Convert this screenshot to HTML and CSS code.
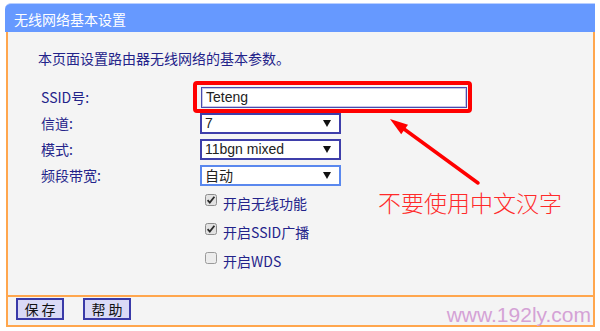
FILE: index.html
```html
<!DOCTYPE html>
<html lang="zh-CN">
<head>
<meta charset="utf-8">
<title>无线网络基本设置</title>
<link rel="stylesheet" href="styles.css">
</head>
<body>
<div class="panel">
  <div class="header">无线网络基本设置</div>
  <div class="content">
    <div class="intro">本页面设置路由器无线网络的基本参数。</div>
    <div class="form">
      <div class="label">SSID号:</div>
      <div class="ctrl"><span class="ssid-wrap"><span class="input">Teteng</span></span></div>
      <div class="label">信道:</div>
      <div class="ctrl"><div class="select"><span>7</span><span class="arrow"></span></div></div>
      <div class="label">模式:</div>
      <div class="ctrl"><div class="select"><span>11bgn mixed</span><span class="arrow"></span></div></div>
      <div class="label">频段带宽:</div>
      <div class="ctrl"><div class="select focus"><span class="cjk">自动</span><span class="arrow"></span></div></div>
      <div class="label"></div>
      <div class="ctrl check-row"><svg class="cb" width="12" height="12" viewBox="0 0 12 12"><rect x="0.5" y="0.5" width="11" height="11" rx="2" fill="#e2e2e2" stroke="#8c8c8c"/><path d="M2.6 6.2 L4.8 8.6 L9.4 2.8" fill="none" stroke="#2a2a2a" stroke-width="1.8"/></svg><span>开启无线功能</span></div>
      <div class="label"></div>
      <div class="ctrl check-row"><svg class="cb" width="12" height="12" viewBox="0 0 12 12"><rect x="0.5" y="0.5" width="11" height="11" rx="2" fill="#e2e2e2" stroke="#8c8c8c"/><path d="M2.6 6.2 L4.8 8.6 L9.4 2.8" fill="none" stroke="#2a2a2a" stroke-width="1.8"/></svg><span>开启SSID广播</span></div>
      <div class="label"></div>
      <div class="ctrl check-row"><svg class="cb" width="12" height="12" viewBox="0 0 12 12"><rect x="0.5" y="0.5" width="11" height="11" rx="2" fill="#ececec" stroke="#9a9a9a"/></svg><span>开启WDS</span></div>
    </div>
    <svg class="arrow-note" width="585" height="263" viewBox="0 0 585 263">
      <line x1="396" y1="97" x2="470" y2="151" stroke="#ff0000" stroke-width="3.5" stroke-linecap="round"/>
      <polygon points="382,87 393.2,102.2 400,92.8" fill="#ff0000"/>
    </svg>
    <div class="note">不要使用中文汉字</div>
  </div>
  <div class="footer">
    <span class="btn">保存</span>
    <span class="btn">帮助</span>
    <span class="watermark">www.192ly.com</span>
  </div>
</div>
</body>
</html>
```
FILE: styles.css
```css
html, body {
  margin: 0;
  padding: 0;
  background: #ffffff;
}
body {
  font-family: "Noto Sans CJK SC", "Liberation Sans", sans-serif;
}
.panel {
  margin: 3px 0 0 5px;
  width: 590px;
}
.header {
  box-sizing: border-box;
  height: 29px;
  background: #6699ff;
  border-top: 1px solid #b9cfff;
  border-top-left-radius: 6px;
  color: #ffffff;
  font-size: 14px;
  line-height: 25px;
  padding: 3px 0 0 9px;
}
.content {
  position: relative;
  box-sizing: border-box;
  margin-left: 1px;
  width: 589px;
  height: 263px;
  background: #f4f4f4;
  border-left: 2px solid #ffa64d;
  border-right: 2px solid #ffa64d;
  padding: 16px 0 0 30px;
}
.intro {
  font-size: 14px;
  line-height: 20px;
  color: #23238a;
}
.form {
  margin: 16px 0 0 3px;
  display: grid;
  grid-template-columns: 159px 1fr;
  grid-template-rows: 26px 26px 26px 26px 29px 29px 29px;
  align-items: center;
}
.label {
  font-size: 14px;
  line-height: 20px;
  color: #23238a;
}
.ctrl {
  display: flex;
  align-items: center;
}
.ssid-wrap {
  position: relative;
  display: block;
  margin-left: 1px;
}
.ssid-wrap::before {
  content: "";
  position: absolute;
  left: -8px;
  top: -6px;
  right: -5px;
  bottom: -5px;
  border: 4px solid #ff0000;
  border-radius: 4px;
}
.input {
  position: relative;
  display: block;
  box-sizing: border-box;
  width: 266px;
  height: 21px;
  background: #ffffff;
  border: 1px solid #4a4aae;
  box-shadow: inset 0 0 0 1px #c8c8e8;
  font-family: "Liberation Sans", Arial, sans-serif;
  font-size: 14px;
  line-height: 19px;
  color: #222222;
  padding-left: 4px;
}
.select {
  box-sizing: border-box;
  width: 141px;
  height: 21px;
  background: #ffffff;
  border: 2px solid #3e3eaa;
  display: flex;
  align-items: center;
  justify-content: space-between;
  padding: 0 8px 0 3px;
  font-family: "Liberation Sans", Arial, sans-serif;
  font-size: 14px;
  color: #222222;
}
.select.focus {
  border-color: #5a88ee;
}
.select .cjk {
  font-family: "Noto Sans CJK SC", sans-serif;
  font-size: 14px;
}
.arrow {
  width: 0;
  height: 0;
  border-left: 4px solid transparent;
  border-right: 4px solid transparent;
  border-top: 7px solid #111111;
}
.check-row {
  padding-left: 5px;
  font-size: 14px;
  line-height: 20px;
  color: #23238a;
}
.cb {
  display: block;
  margin-right: 6px;
  margin-top: -5px;
}
.arrow-note {
  position: absolute;
  left: 0;
  top: 0;
}
.note {
  position: absolute;
  left: 370px;
  top: 159px;
  font-size: 23px;
  line-height: 23px;
  font-weight: 300;
  color: #ff2a2a;
  white-space: nowrap;
}
.footer {
  position: relative;
  box-sizing: border-box;
  margin-left: 1px;
  width: 589px;
  height: 32px;
  background: #f4f4f4;
  border: 2px solid #ffa64d;
  padding: 1px 0 0 8px;
  display: flex;
  gap: 19px;
}
.btn {
  box-sizing: border-box;
  width: 48px;
  height: 22px;
  background: #dadaf6;
  border: 2px solid #3a3aa8;
  font-size: 14px;
  line-height: 18px;
  letter-spacing: 3px;
  text-indent: 3px;
  color: #111111;
  text-align: center;
}
.watermark {
  position: absolute;
  right: 2px;
  top: 7px;
  font-family: "Liberation Sans", Arial, sans-serif;
  font-size: 21px;
  line-height: 21px;
  color: #d4a2d6;
}
```
